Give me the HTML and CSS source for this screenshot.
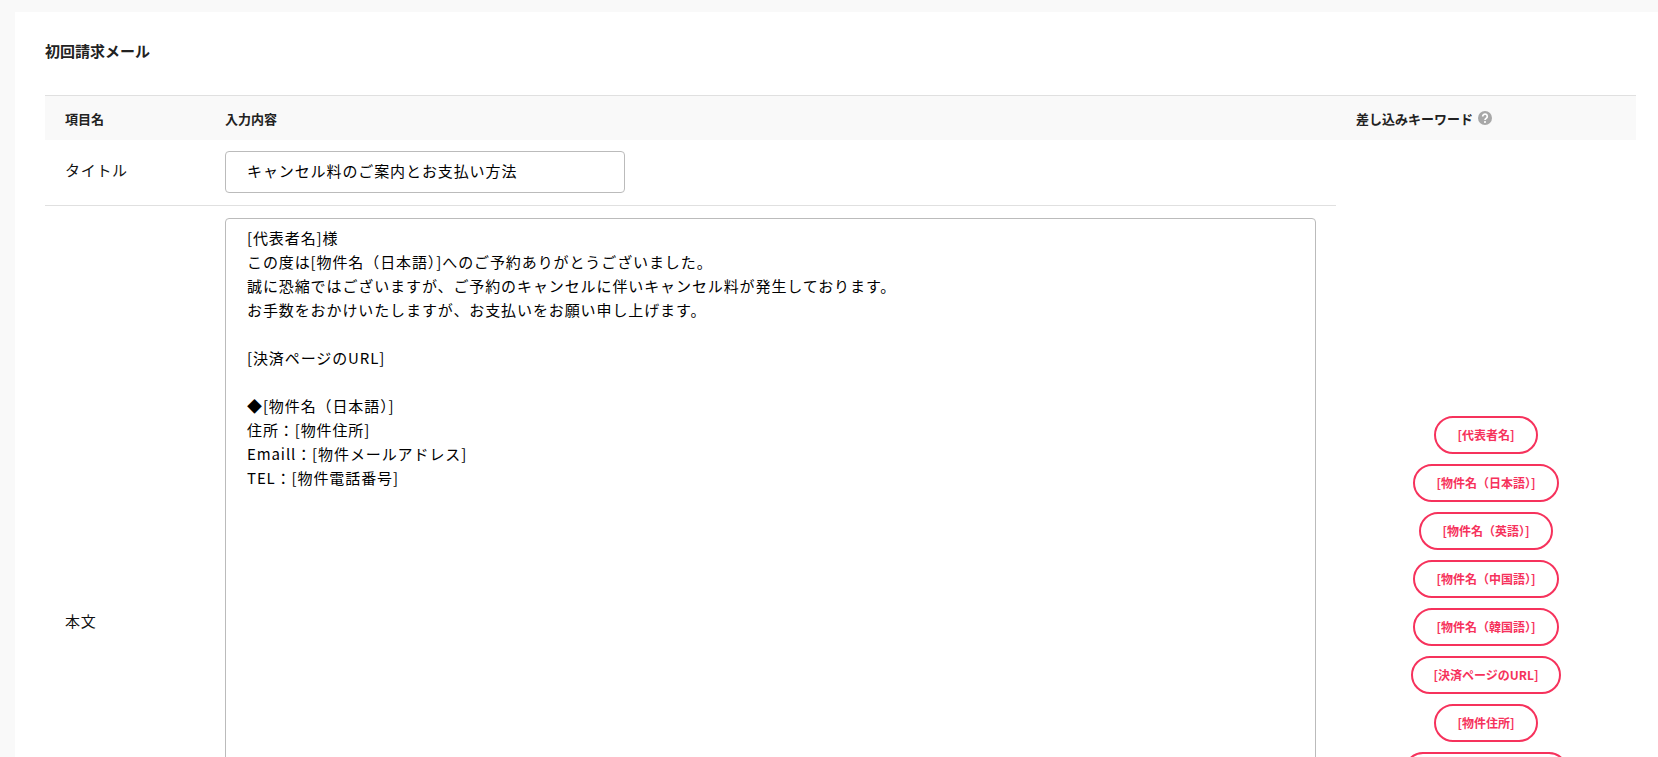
FILE: index.html
```html
<!DOCTYPE html>
<html lang="ja">
<head>
<meta charset="utf-8">
<title>初回請求メール</title>
<link rel="stylesheet" href="styles.css">
</head>
<body>
<main class="card">
  <h1 class="card-title">初回請求メール</h1>
  <div class="head-row">
    <div class="col-name">項目名</div>
    <div class="col-input">入力内容</div>
    <div class="col-keyword">差し込みキーワード
      <svg class="help" viewBox="0 0 14 14" aria-hidden="true"><circle cx="7" cy="7" r="7" fill="#a8a8a8"/><path d="M4.7 5.5a2.3 2.3 0 1 1 3.6 1.8c-.9.6-1.3 1-1.3 1.8" fill="none" stroke="#fff" stroke-width="1.7"/><circle cx="7" cy="11" r="1.05" fill="#fff"/></svg>
    </div>
  </div>
  <div class="body-grid">
    <div class="fields">
      <div class="field-row">
        <div class="col-name col-name-title">タイトル</div>
        <input class="title-input" type="text" value="キャンセル料のご案内とお支払い方法">
      </div>
      <div class="field-row field-row-body">
        <div class="col-name">本文</div>
        <textarea class="body-input">[代表者名]様
この度は[物件名（日本語）]へのご予約ありがとうございました。
誠に恐縮ではございますが、ご予約のキャンセルに伴いキャンセル料が発生しております。
お手数をおかけいたしますが、お支払いをお願い申し上げます。

[決済ページのURL]

◆[物件名（日本語）]
住所：[物件住所]
Emaill：[物件メールアドレス]
TEL：[物件電話番号]</textarea>
      </div>
    </div>
    <div class="keywords">
      <button class="pill">[代表者名]</button>
      <button class="pill">[物件名（日本語）]</button>
      <button class="pill">[物件名（英語）]</button>
      <button class="pill">[物件名（中国語）]</button>
      <button class="pill">[物件名（韓国語）]</button>
      <button class="pill">[決済ページのURL]</button>
      <button class="pill">[物件住所]</button>
      <button class="pill">[物件メールアドレス]</button>
      <button class="pill">[物件電話番号]</button>
    </div>
  </div>
</main>
</body>
</html>
```
FILE: styles.css
```css
* { box-sizing: border-box; }
html, body { height: 100%; overflow: hidden; }
body {
  margin: 0;
  background: #f9f9f9;
  color: #222;
  font-family: "Noto Sans CJK JP", "Noto Sans", sans-serif;
}
.card {
  margin: 12px 0 0 15px;
  padding: 0 22px 40px 30px;
  background: #fff;
}
.card-title {
  margin: 0;
  height: 83px;
  padding-bottom: 6px;
  display: flex;
  align-items: center;
  font-size: 15px;
  font-weight: 700;
}
.head-row {
  display: flex;
  align-items: center;
  height: 45px;
  border-top: 1px solid #e0e0e0;
  background: #f9f9f9;
  font-size: 13px;
  font-weight: 700;
}
.col-name { width: 180px; padding-left: 20px; flex: none; }
.col-name-title { padding-bottom: 5px; }
.col-input { width: 1131px; flex: none; }
.col-keyword { display: flex; align-items: center; gap: 5px; }
.help { width: 14px; height: 14px; }
.body-grid { display: flex; }
.fields { width: 1291px; flex: none; }
.field-row {
  display: flex;
  align-items: center;
  height: 66px;
  padding-bottom: 1px;
  border-bottom: 1px solid #e0e0e0;
  font-size: 15px;
  letter-spacing: .7px;
  color: #111;
}
.field-row-body {
  height: auto;
  padding: 12px 0;
  border-bottom: 0;
}
.title-input, .body-input {
  font-family: inherit;
  font-size: 15px;
  letter-spacing: .9px;
  color: #000;
  border: 1px solid #bbb;
  border-radius: 4px;
  background: #fff;
  padding: 0 21px;
  outline: 0;
}
.title-input { width: 400px; height: 42px; padding-bottom: 4px; }
.body-input {
  display: block;
  width: 1091px;
  height: 804px;
  padding-top: 7px;
  line-height: 24px;
  resize: none;
  overflow: hidden;
}
.keywords {
  flex: 1;
  display: flex;
  flex-direction: column;
  align-items: center;
  gap: 10px;
  padding-top: 276px;
}
.pill {
  height: 38px;
  padding: 0 21px 2px;
  border: 2px solid #f6325c;
  border-radius: 19px;
  background: #fff;
  color: #f6325c;
  font-family: inherit;
  font-size: 12px;
  font-weight: 700;
  white-space: nowrap;
}
```
